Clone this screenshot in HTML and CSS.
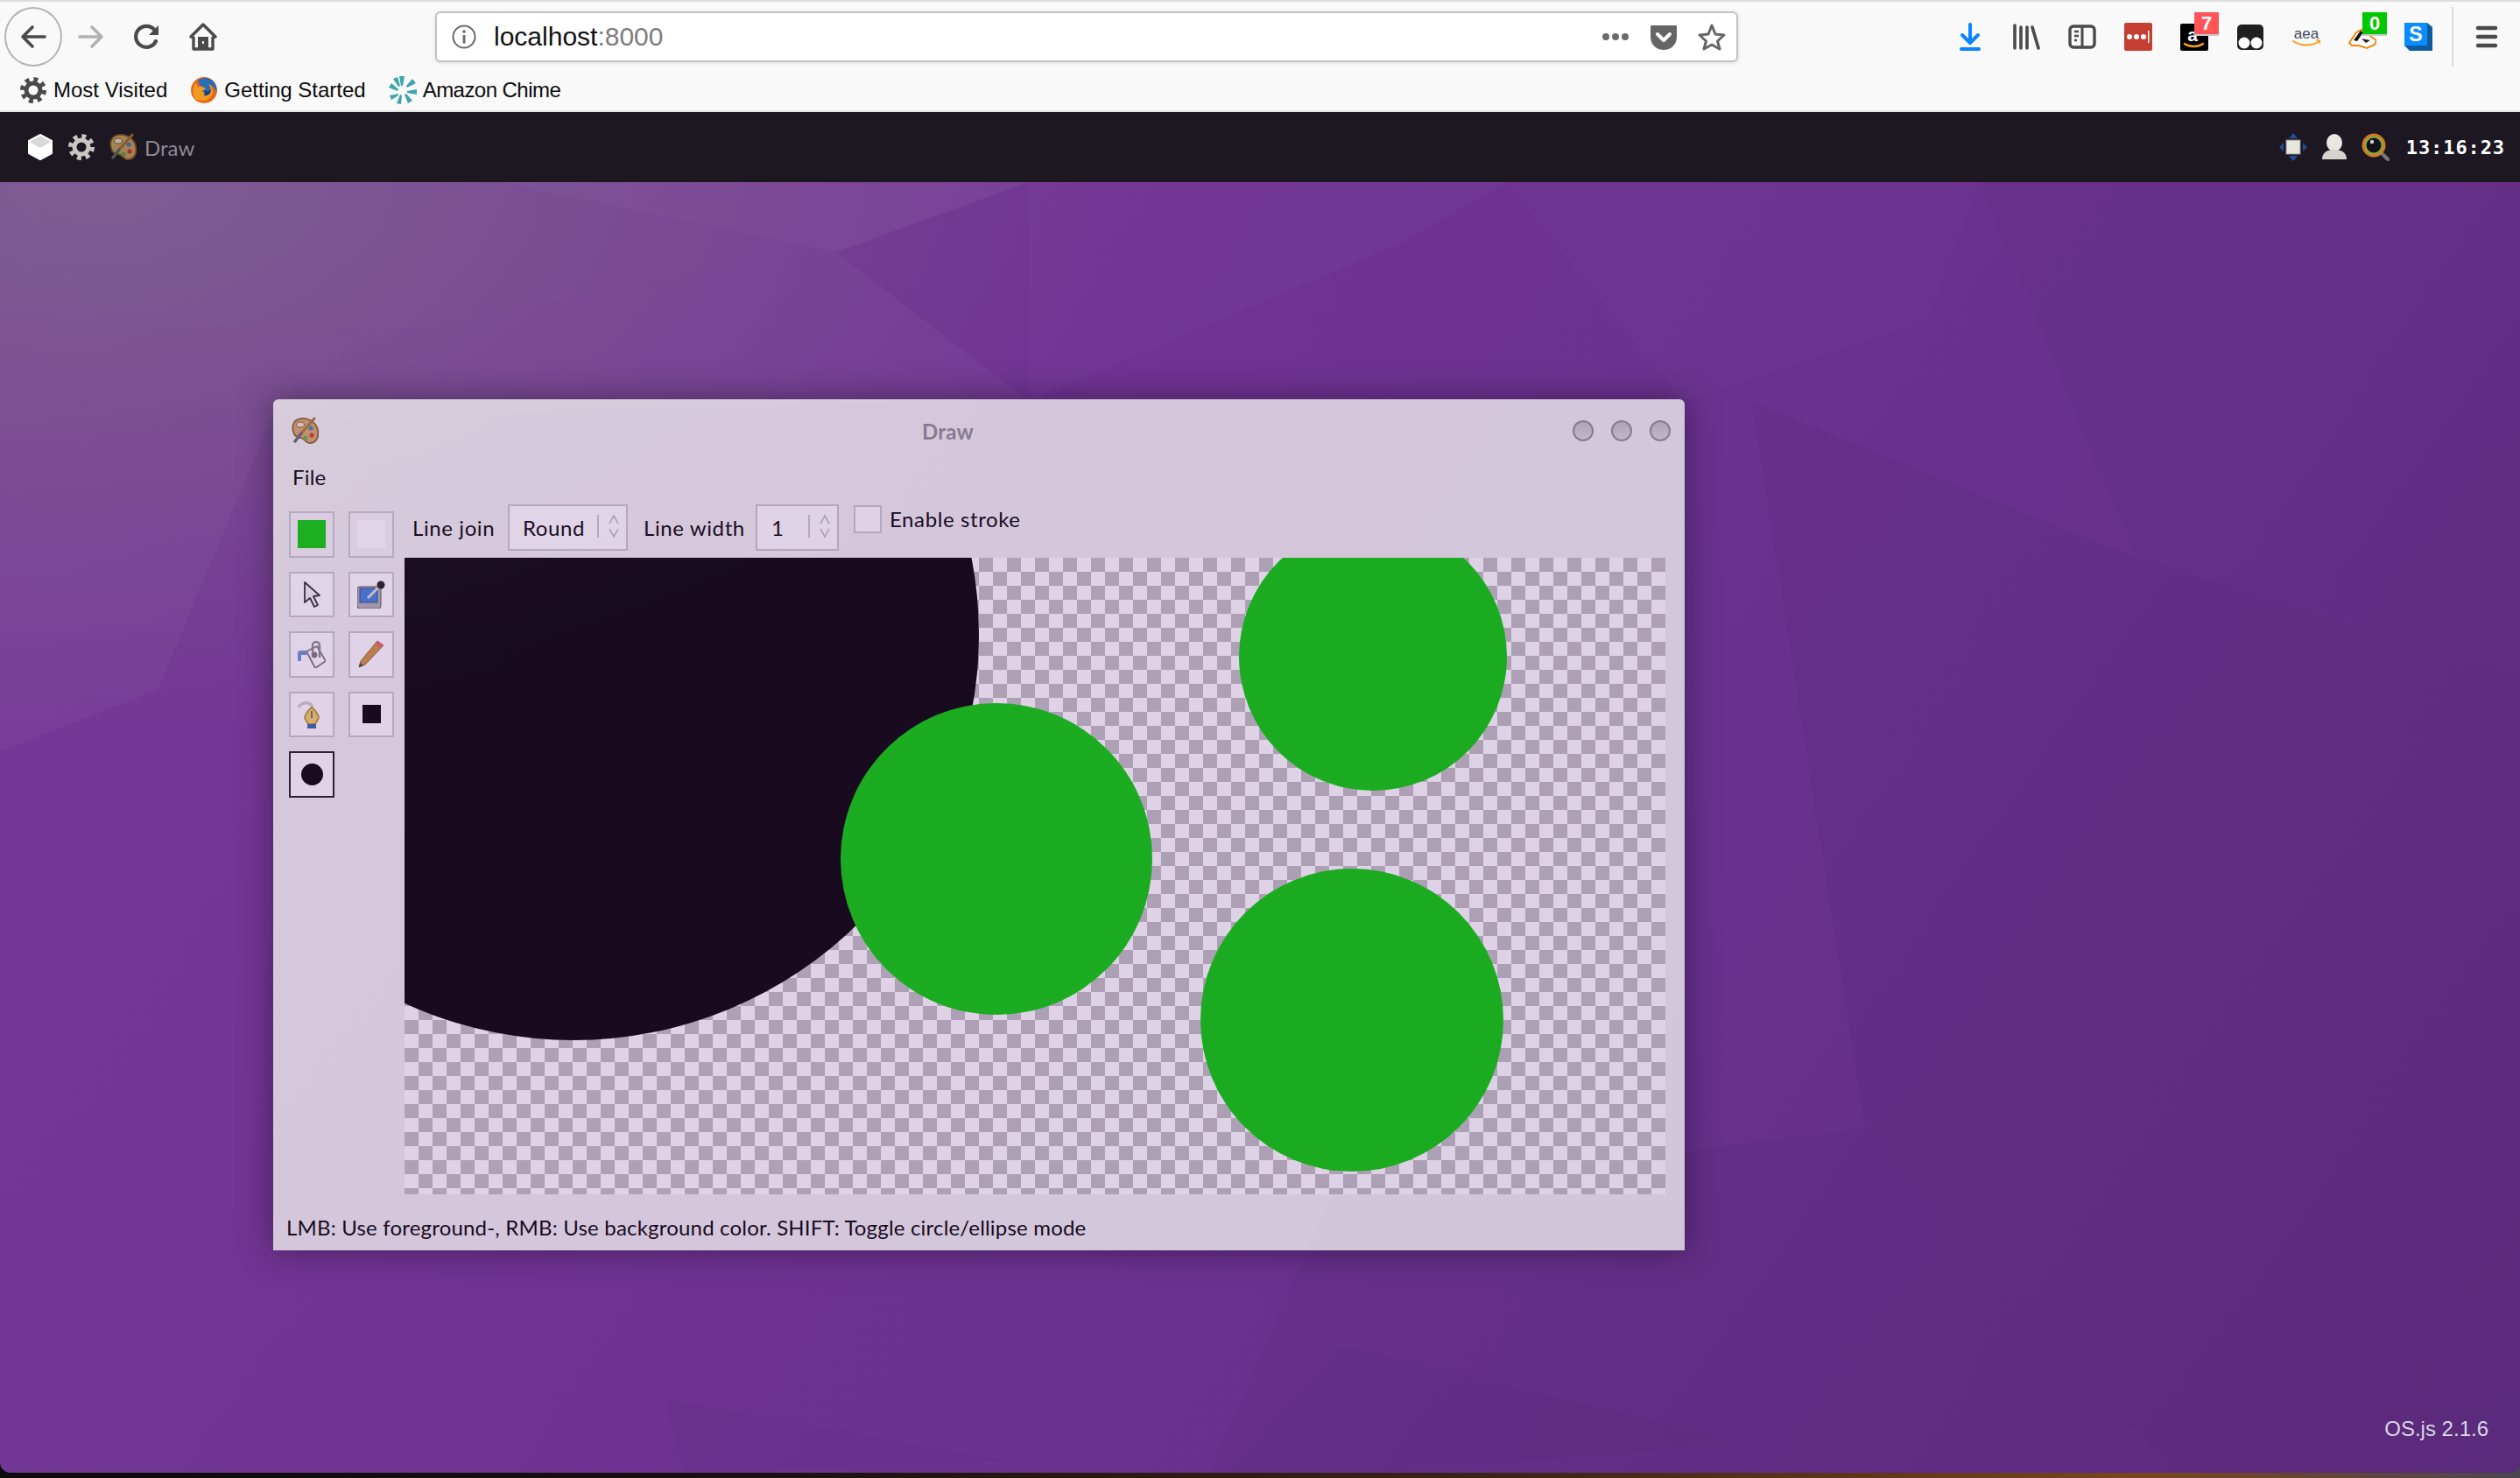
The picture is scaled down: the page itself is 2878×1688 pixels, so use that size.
FILE: index.html
```html
<!DOCTYPE html>
<html lang="en">
<head>
    <meta charset="UTF-8">
    <title>OS.js</title>
    <link rel="stylesheet" href="styles.css">
</head>
<body>
    <svg class="sprite" width="0" height="0">
        <symbol id="gear" viewBox="0 0 32 32">
            <circle cx="16" cy="16" r="8" fill="none" stroke="currentColor" stroke-width="5"/>
            <circle cx="16" cy="16" r="12.5" fill="none" stroke="currentColor" stroke-width="5" stroke-dasharray="4.9 4.92"/>
        </symbol>
        <symbol id="palette" viewBox="0 0 32 32">
            <path d="M8 3c7-3 18 0 22 9 3 8 1 17-7 18-5 1-6-3-9-5-3-2-8-1-10-5C1 13 2 6 8 3z" fill="#d3a665" stroke="#8a5f2a" stroke-width="1.8"/>
            <ellipse cx="11" cy="9" rx="4.500" ry="3" fill="#efe3cf" stroke="#8a5f2a"/>
            <circle cx="23" cy="13" r="2.600" fill="#4a78c0"/>
            <circle cx="24" cy="21" r="2.600" fill="#d23a2c"/>
            <circle cx="17" cy="24" r="2.600" fill="#6fa83c"/>
            <path d="M27 2 12 19" stroke="#a9752f" stroke-width="3" stroke-linecap="round"/>
            <path d="M12 19 5 28" stroke="#5f666e" stroke-width="3.500" stroke-linecap="round"/>
        </symbol>
    </svg>

    <header class="browser-bar">
        <div class="back-btn">
            <svg class="icon" viewBox="0 0 32 32"><path d="M29 16H5M15 5 4 16l11 11" fill="none" stroke="#4a4a4a" stroke-width="3.6" stroke-linecap="round" stroke-linejoin="round"/></svg>
        </div>
        <svg class="icon forward" viewBox="0 0 32 32"><path d="M3 16h24M17 5l11 11-11 11" fill="none" stroke="#b1b1b1" stroke-width="3.6" stroke-linecap="round" stroke-linejoin="round"/></svg>
        <svg class="icon nav-icon" viewBox="0 0 32 32"><path d="M26 21a12 12 0 1 1-1-12" fill="none" stroke="#4a4a4a" stroke-width="4.200" stroke-linecap="round"/><path d="M29 3v11H18z" fill="#4a4a4a"/></svg>
        <svg class="icon nav-icon" viewBox="0 0 32 32"><path d="M2 16 16 2l14 14-3 1v13H5V17z" fill="none" stroke="#4a4a4a" stroke-width="3.400" stroke-linejoin="round"/><rect x="10" y="16" width="12" height="14" fill="#4a4a4a"/><rect x="15" y="21" width="2" height="3" fill="#f9f9f9"/></svg>

        <div class="url-bar">
            <svg class="info-icon" viewBox="0 0 30 30"><circle cx="15" cy="15" r="12.500" fill="none" stroke="#6a6a6a" stroke-width="2"/><circle cx="15" cy="9" r="1.800" fill="#6a6a6a"/><rect x="13.600" y="13" width="2.800" height="9.500" fill="#6a6a6a"/></svg>
            <span class="url-host">localhost</span><span class="url-port">:8000</span>
            <div class="url-actions">
                <svg class="icon" viewBox="0 0 32 32"><circle cx="5" cy="16" r="4" fill="#6b6b6b"/><circle cx="16" cy="16" r="4" fill="#6b6b6b"/><circle cx="27" cy="16" r="4" fill="#6b6b6b"/></svg>
                <svg class="icon" viewBox="0 0 32 32"><path d="M2 3h28a1 1 0 0 1 1 1v12c0 9-7 15-15 15S1 25 1 16V4a1 1 0 0 1 1-1z" fill="#666"/><path d="m9 13 7 7 7-7" fill="none" stroke="#fff" stroke-width="4" stroke-linecap="round" stroke-linejoin="round"/></svg>
                <svg class="icon" viewBox="0 0 32 32"><path d="m16 3 4 10 10 1-7.500 7 2.500 9-9-5-9 5 2.500-9L2 14l10-1z" fill="none" stroke="#666" stroke-width="3" stroke-linejoin="round"/></svg>
            </div>
        </div>

        <div class="addons">
            <svg class="icon" viewBox="0 0 32 32"><path d="M16 2v20M7 14l9 9 9-9" fill="none" stroke="#0a84ff" stroke-width="4" stroke-linecap="round" stroke-linejoin="round"/><rect x="4" y="28" width="24" height="4" rx="2" fill="#0a84ff"/></svg>
            <svg class="icon" viewBox="0 0 32 32"><g fill="none" stroke="#4a4a4a" stroke-width="3.600" stroke-linecap="round"><path d="M3 3v26M10 5v24M17 5v24M23 5l7 24"/></g></svg>
            <svg class="icon" viewBox="0 0 32 32"><rect x="2" y="4" width="28" height="24" rx="4" fill="none" stroke="#4a4a4a" stroke-width="3.400"/><path d="M16 4v24" stroke="#4a4a4a" stroke-width="3"/><path d="M7 10h5M7 15h5M7 20h3" stroke="#4a4a4a" stroke-width="2.400"/></svg>
            <svg class="icon" viewBox="0 0 32 32"><rect width="32" height="32" rx="2" fill="#c43e32"/><circle cx="6" cy="16" r="3" fill="#fff"/><circle cx="14" cy="16" r="3" fill="#fff"/><circle cx="22" cy="16" r="3" fill="#fff"/><rect x="27" y="9" width="1.500" height="14" fill="#fff"/></svg>
            <div class="addon">
                <svg class="icon" viewBox="0 0 32 32"><rect y="1" width="32" height="31" rx="2" fill="#000"/><text class="amazon-a" x="14" y="21" text-anchor="middle">a</text><path d="M5 24c6 4 15 4 21 0" fill="none" stroke="#f7a01c" stroke-width="2.400" stroke-linecap="round"/></svg>
                <span class="badge badge-red">7</span>
            </div>
            <svg class="icon" viewBox="0 0 32 32"><rect x="1" y="2" width="30" height="29" rx="5" fill="#1f1f1f"/><circle cx="9" cy="23" r="6.500" fill="#fff"/><circle cx="23" cy="23" r="6.500" fill="#fff"/></svg>
            <svg class="icon" viewBox="0 0 32 32"><text class="aea-text" x="16" y="18" text-anchor="middle">aea</text><path d="M1 21c9 6 21 6 30 0" fill="none" stroke="#f7a01c" stroke-width="2" stroke-linecap="round"/><path d="m27 20 5 0-1 4" fill="none" stroke="#f7a01c" stroke-width="1.500"/></svg>
            <div class="addon">
                <svg class="icon" viewBox="0 0 32 32"><path d="M1 23 9 11l8-4 9 9 6 4-2 5-9 4-9-3-8 0z" fill="#fff" stroke="#f08a10" stroke-width="2"/><path d="m6 20 8-11 3 2-7 10z" fill="#111"/><path d="m15 18 10 2-5 3z" fill="#222"/></svg>
                <span class="badge badge-green">0</span>
            </div>
            <svg class="icon" viewBox="0 0 32 32"><path d="M26 0l6 5v27H6l-6-6V0z" fill="#0e5c9e"/><rect width="26" height="26" fill="#0a8dff"/><text class="skype-s" x="13" y="21" text-anchor="middle">S</text></svg>
        </div>
        <div class="bar-divider"></div>
        <svg class="icon" viewBox="0 0 32 32"><path d="M6 6h20M6 16h20M6 26h20" stroke="#4a4a4a" stroke-width="4.400" stroke-linecap="round"/></svg>
    </header>

    <nav class="bookmarks">
        <div class="bookmark">
            <svg class="bookmark-icon gear-dark"><use href="#gear"/></svg>
            <span>Most Visited</span>
        </div>
        <div class="bookmark">
            <svg class="bookmark-icon" viewBox="0 0 32 32">
                <circle cx="16" cy="16" r="15" fill="#e8661c"/>
                <path d="M6 26C2 20 3 12 7 7c0 3 1 5 3 6 2-3 5-5 8-5 5 0 8 4 8 9 0 6-5 11-11 11-4 0-7-1-9-2z" fill="#f09a20"/>
                <path d="M9 5c4-4 13-4 18 1 3 4 4 9 3 12-2-5-5-8-9-9 2 2 3 5 1 8-3 3-7 2-8 0l4-3c-3-2-6-2-7-4z" fill="#2a6db4"/>
                <path d="M17 16c2 3 7 1 7-3 1 6-3 10-8 9z" fill="#1c3f80"/>
            </svg>
            <span>Getting Started</span>
        </div>
        <div class="bookmark bookmark-tight">
            <svg class="bookmark-icon" viewBox="0 0 32 32">
                <g fill="#3da5ac">
                    <path d="M12 0h6l-2 11h-2z"/>
                    <path d="m27 3 4 5-10 5-1-2z"/>
                    <path d="M32 15v6l-11-2v-2z"/>
                    <path d="m27 28-5 3-4-10 2-1z"/>
                    <path d="m14 32-5-1 4-10 2 1z"/>
                    <path d="m3 27-2-5 10-2v2z"/>
                    <path d="M0 13l3-5 8 7-1 2z"/>
                    <path d="m5 3 5-2 3 10-2 1z"/>
                </g>
            </svg>
            <span>Amazon Chime</span>
        </div>
    </nav>

    <div class="taskbar">
        <svg class="icon" viewBox="0 0 32 32">
            <path d="M16 2 29 9v14l-13 7-13-7V9z" fill="#fff" stroke="#fff" stroke-width="2" stroke-linejoin="round"/>
            <path d="m16 3 12 7-12 7-12-7z" fill="#d8d8d8"/>
        </svg>
        <svg class="icon gear-light"><use href="#gear"/></svg>
        <svg class="icon task-icon"><use href="#palette"/></svg>
        <span class="task-label">Draw</span>
        <div class="tray">
            <svg class="icon" viewBox="0 0 32 32">
                <g fill="#1d4f9c"><path d="m16 0 5 6H11zM16 32l-5-6h10zM0 16l5-5v10zM32 16l-5 5V11z"/></g>
                <rect x="8" y="8" width="16" height="16" fill="#e7e6df" stroke="#8d8c86"/>
            </svg>
            <svg class="icon" viewBox="0 0 32 32">
                <ellipse cx="16" cy="11" rx="9" ry="10" fill="#e9e7e2"/>
                <path d="M2 30c0-8 6-11 14-11s14 3 14 11z" fill="#d5d3cc"/>
            </svg>
            <svg class="icon" viewBox="0 0 32 32">
                <path d="m23 23 7 7" stroke="#777" stroke-width="4" stroke-linecap="round"/>
                <circle cx="14" cy="14" r="13.500" fill="#d07a28"/>
                <circle cx="14" cy="14" r="10.500" fill="#7fb040"/>
                <circle cx="14" cy="14" r="8.500" fill="#15131a"/>
                <circle cx="12" cy="10" r="2.200" fill="#cfcfd6"/>
            </svg>
            <span class="clock">13:16:23</span>
        </div>
    </div>

    <main class="desktop">
        <div class="wall">
            <svg class="wall-art" viewBox="0 0 2878 1474" preserveAspectRatio="none">
                <g fill="#fff">
                    <polygon points="0,0 570,0 955,80 420,175 0,160" fill-opacity=".035"/>
                    <polygon points="570,0 1175,0 955,80" fill-opacity=".05"/>
                    <polygon points="420,175 955,80 1175,250 310,270" fill-opacity=".03"/>
                    <polygon points="0,160 420,175 310,270 180,580 0,650" fill-opacity=".03"/>
                    <polygon points="1175,0 1720,0 1600,70 1175,250" fill-opacity=".02"/>
                    <polygon points="1720,0 2260,0 2200,160 1920,250" fill-opacity=".01"/>
                </g>
                <g fill="#000">
                    <polygon points="2260,0 2878,0 2878,560 2440,430" fill-opacity=".02"/>
                    <polygon points="2000,250 2440,430 2878,560 2878,1474 2480,1474 2130,1080" fill-opacity=".03"/>
                    <polygon points="1520,1160 2130,1080 2480,1474 1380,1474" fill-opacity=".025"/>
                    <polygon points="1530,1330 2000,1440 1580,1474 1400,1474" fill-opacity=".02"/>
                    <polygon points="760,1390 1150,1460 780,1474" fill-opacity=".02"/>
                </g>
            </svg>
        </div>

        <section class="window">
            <div class="win-title">
                <svg class="win-icon"><use href="#palette"/></svg>
                <span class="win-name">Draw</span>
                <div class="win-buttons">
                    <span class="win-button"></span>
                    <span class="win-button"></span>
                    <span class="win-button"></span>
                </div>
            </div>
            <div class="win-menu"><span>File</span></div>
            <div class="win-body">
                <div class="tools">
                    <div class="tool"><span class="swatch swatch-fg"></span></div>
                    <div class="tool"><span class="swatch swatch-bg"></span></div>
                    <div class="tool">
                        <svg class="tool-icon" viewBox="0 0 32 32"><path d="M8 2v23l6-5 5 10 4-2-5-10 7-1z" fill="#f4f4f4" stroke="#2a2a2a" stroke-width="1.800" stroke-linejoin="round"/></svg>
                    </div>
                    <div class="tool">
                        <svg class="tool-icon" viewBox="0 0 32 32">
                            <rect x="0" y="7" width="27" height="25" rx="3" fill="#b0b0b0" stroke="#555"/>
                            <rect x="3" y="9" width="20" height="16" fill="#3f7fd8" stroke="#224c88"/>
                            <path d="m12 20 12-12" stroke="#ddd" stroke-width="3"/>
                            <circle cx="27" cy="5" r="4.500" fill="#1a1a1a"/>
                        </svg>
                    </div>
                    <div class="tool">
                        <svg class="tool-icon" viewBox="0 0 32 32">
                            <path d="M10 13 22 7l10 17-12 8z" fill="#fff" stroke="#777" stroke-width="1.800" stroke-linejoin="round"/>
                            <path d="M17 14V6a4 4 0 0 1 8 0v14" fill="none" stroke="#888" stroke-width="2.400"/>
                            <circle cx="19" cy="17" r="3.400" fill="#777"/>
                            <path d="M11 12H3a3 3 0 0 0-3 3v9h4v-7h6z" fill="#6f8fd8"/>
                        </svg>
                    </div>
                    <div class="tool">
                        <svg class="tool-icon" viewBox="0 0 32 32">
                            <path d="M23 1 4 24l-2 7 7-3L30 6z" fill="#cf9240" stroke="#8a6024"/>
                            <path d="m23 1 7 5-3 3-7-5z" fill="#e8626a"/>
                            <path d="m2 31 1-5 4 3z" fill="#444"/>
                        </svg>
                    </div>
                    <div class="tool">
                        <svg class="tool-icon" viewBox="0 0 32 32">
                            <path d="M1 8c3-6 12-7 15-2 1 2 1 4 1 6" fill="none" stroke="#cfcfcf" stroke-width="3.500"/>
                            <path d="M16 8c3 2 8 8 8 12l-4 7h-8l-4-7c0-4 5-10 8-12z" fill="#f0d060" stroke="#b8952c" stroke-width="1.800"/>
                            <path d="M16 12v8" stroke="#555" stroke-width="1.500"/>
                            <rect x="11" y="27" width="10" height="5" fill="#3564b0"/>
                        </svg>
                    </div>
                    <div class="tool"><span class="shape-square"></span></div>
                    <div class="tool tool-active"><span class="shape-circle"></span></div>
                </div>
                <div class="work">
                    <div class="options">
                        <span class="opt-label">Line join</span>
                        <div class="select select-join">
                            <span class="select-value">Round</span>
                            <span class="select-line"></span>
                            <svg class="select-arrows" viewBox="0 0 12 26"><path d="M1 10 6 1l5 9M1 16l5 9 5-9" fill="none" stroke="#b4b4b4" stroke-width="1.500"/></svg>
                        </div>
                        <span class="opt-label">Line width</span>
                        <div class="select select-width">
                            <span class="select-value">1</span>
                            <span class="select-line"></span>
                            <svg class="select-arrows" viewBox="0 0 12 26"><path d="M1 10 6 1l5 9M1 16l5 9 5-9" fill="none" stroke="#b4b4b4" stroke-width="1.500"/></svg>
                        </div>
                        <span class="checkbox"></span>
                        <span class="check-label">Enable stroke</span>
                    </div>
                    <div class="canvas">
                        <svg class="canvas-art" viewBox="0 0 1440 727">
                            <circle cx="193" cy="88" r="463" fill="#000"/>
                            <circle cx="676" cy="344" r="178" fill="#05ce02"/>
                            <circle cx="1106" cy="113" r="153" fill="#05ce02"/>
                            <circle cx="1082" cy="528" r="173" fill="#05ce02"/>
                        </svg>
                    </div>
                </div>
            </div>
            <div class="win-status">LMB: Use foreground-, RMB: Use background color. SHIFT: Toggle circle/ellipse mode</div>
        </section>

        <div class="version">OS.js 2.1.6</div>
    </main>
</body>
</html>
```

FILE: styles.css
```css
* {
    box-sizing: border-box;
}

html, body {
    margin: 0;
    height: 100%;
    overflow: hidden;
}

body {
    width: 2878px;
    height: 1688px;
    background-color: #f9f9f9;
    font-family: "Liberation Sans", Arial, sans-serif;
}

.sprite {
    position: absolute;
}

.icon {
    display: block;
    flex: none;
    width: 32px;
    height: 32px;
}

/* browser chrome */
.browser-bar {
    display: flex;
    align-items: center;
    height: 82px;
    padding-left: 5px;
    border-top: 2px solid #dedede;
    background-color: #f9f9f9;
}

.back-btn {
    display: flex;
    align-items: center;
    justify-content: center;
    flex: none;
    width: 66px;
    height: 68px;
    border: 2px solid #b4b4b4;
    border-radius: 50%;
}

.forward {
    margin-left: 17px;
}

.nav-icon {
    margin-left: 32px;
}

.url-bar {
    display: flex;
    align-items: center;
    flex: none;
    width: 1488px;
    height: 58px;
    margin-left: 249px;
    padding: 0 12px 0 16px;
    border: 2px solid #c2c2c2;
    border-radius: 6px;
    background-color: #fff;
    box-shadow: 0 1px 4px rgba(0, 0, 0, 0.12);
    font-size: 30px;
}

.info-icon {
    width: 30px;
    height: 30px;
    margin-right: 19px;
}

.url-host {
    color: #111;
}

.url-port {
    color: #7d7d7d;
}

.url-actions {
    display: flex;
    gap: 23px;
    margin-left: auto;
}

.addons {
    display: flex;
    gap: 32px;
    margin-left: 249px;
}

.addon {
    position: relative;
    width: 32px;
    height: 32px;
}

.badge {
    position: absolute;
    top: -12px;
    left: 16px;
    width: 28px;
    height: 27px;
    border-bottom: 2px solid #c9c9c9;
    color: #fff;
    font-size: 22px;
    font-weight: bold;
    line-height: 25px;
    text-align: center;
}

.badge-red {
    background-color: #ff5558;
}

.badge-green {
    background-color: #00c800;
}

.amazon-a {
    fill: #fff;
    font-family: "Liberation Sans", sans-serif;
    font-size: 21px;
    font-weight: bold;
}

.aea-text {
    fill: #3f4a5c;
    font-family: "Liberation Sans", sans-serif;
    font-size: 17px;
}

.skype-s {
    fill: #fff;
    font-family: "Liberation Sans", sans-serif;
    font-size: 23px;
    font-weight: bold;
}

.bar-divider {
    flex: none;
    width: 2px;
    height: 68px;
    margin: 0 22px;
    background-color: #dcdcdc;
}

.bookmarks {
    display: flex;
    gap: 26px;
    height: 46px;
    padding: 0 0 2px 22px;
    border-bottom: 2px solid #e2e2e2;
    background-color: #f9f9f9;
    color: #0c0c0c;
    font-size: 24px;
}

.bookmark {
    display: flex;
    align-items: center;
    gap: 7px;
}

.bookmark-tight {
    letter-spacing: -0.55px;
}

.bookmark-icon {
    width: 32px;
    height: 32px;
}

.gear-dark {
    color: #4a4a4a;
}

/* OS.js panel */
.taskbar {
    display: flex;
    align-items: center;
    gap: 15px;
    height: 80px;
    padding: 0 17px 0 30px;
    background-color: #1d1722;
}

.gear-light {
    color: #c9c7c4;
}

.task-icon {
    opacity: 0.75;
}

.task-label {
    margin-left: -6px;
    color: #8d8a92;
    font-family: Lato, sans-serif;
    font-size: 24px;
}

.tray {
    display: flex;
    align-items: center;
    gap: 15px;
    margin-left: auto;
}

.clock {
    margin-left: 4px;
    color: #fff;
    font-family: "DejaVu Sans Mono", monospace;
    font-size: 22px;
    font-weight: bold;
    letter-spacing: 0.9px;
}

/* desktop */
.desktop {
    position: relative;
    height: 1480px;
    background: linear-gradient(90deg, #0d0b0e 0%, #17110f 30%, #3c2418 60%, #7a4420 85%, #4a4650 100%);
}

.wall {
    height: 1474px;
    border-radius: 0 0 12px 12px;
    overflow: hidden;
    background:
        radial-gradient(1150px 620px at 120px 0, rgba(130, 140, 125, 0.36), rgba(130, 140, 125, 0) 100%),
        linear-gradient(125deg, #773a97 0%, #6f3392 40%, #68318d 65%, #5d2c7f 100%);
}

.wall-art {
    display: block;
    width: 100%;
    height: 100%;
}

.version {
    position: absolute;
    right: 36px;
    bottom: 42px;
    color: #dcd5e6;
    font-size: 24px;
    line-height: 28px;
}

/* draw window */
.window {
    position: absolute;
    top: 248px;
    left: 312px;
    display: flex;
    flex-direction: column;
    width: 1612px;
    height: 972px;
    border-radius: 6px 6px 0 0;
    background-color: #f1f1f0;
    box-shadow: 0 0 36px rgba(0, 0, 0, 0.5);
    color: #000;
    font-family: Lato, sans-serif;
    font-size: 24px;
    letter-spacing: 0.19px;
    opacity: 0.78;
}

.win-title {
    position: relative;
    display: flex;
    align-items: center;
    flex: none;
    height: 72px;
    padding: 0 16px 0 20px;
}

.win-icon {
    width: 32px;
    height: 32px;
}

.win-name {
    position: absolute;
    left: 741px;
    color: #8f8f8f;
    font-weight: bold;
}

.win-buttons {
    display: flex;
    gap: 20px;
    margin-left: auto;
}

.win-button {
    width: 24px;
    height: 24px;
    border: 2px solid #909090;
    border-radius: 50%;
    background: linear-gradient(#c4c4c4, #dcdcdc);
}

.win-menu {
    flex: none;
    height: 48px;
    padding-left: 22px;
    line-height: 34px;
}

.win-body {
    display: flex;
    flex: none;
    height: 788px;
    padding: 0 22px 0 18px;
}

.tools {
    display: grid;
    grid-template-columns: 52px 52px;
    grid-auto-rows: 52.5px;
    gap: 16px;
    flex: none;
    width: 132px;
    padding-top: 8px;
}

.tool {
    display: flex;
    align-items: center;
    justify-content: center;
    border: 2px solid #c8c8c8;
    background-color: #fff;
}

.tool-active {
    border-color: #1c1c1c;
}

.tool-icon {
    width: 32px;
    height: 32px;
}

.swatch {
    width: 32px;
    height: 32px;
}

.swatch-fg {
    background-color: #05ce02;
}

.swatch-bg {
    background-color: #fff;
}

.tool:nth-child(-n+2) {
    background-color: #f5f5f5;
}

.shape-square {
    width: 21px;
    height: 21px;
    background-color: #000;
}

.shape-circle {
    width: 25px;
    height: 25px;
    border-radius: 50%;
    background-color: #000;
}

.work {
    display: flex;
    flex-direction: column;
    flex: 1;
}

.options {
    display: flex;
    align-items: flex-start;
    flex: none;
    height: 61px;
    padding-left: 9px;
    letter-spacing: 0.6px;
}

.opt-label {
    width: 91px;
    white-space: nowrap;
    line-height: 53px;
}

.opt-label + .select + .opt-label {
    width: 110px;
}

.select {
    display: flex;
    align-items: center;
    height: 53px;
    border: 2px solid #c8c8c8;
    background-color: #fff;
}

.select-join {
    width: 137px;
    margin: 0 18px;
    padding-left: 15px;
}

.select-width {
    width: 95px;
    margin: 0 17px 0 18px;
    padding-left: 16px;
}

.select-value {
    flex: 1;
}

.select-line {
    width: 2px;
    height: 26px;
    margin-bottom: 4px;
    background-color: #c8c8c8;
}

.select-arrows {
    width: 12px;
    height: 26px;
    margin: 0 8px 4px 11px;
}

.checkbox {
    flex: none;
    width: 32px;
    height: 32px;
    margin-top: 1px;
    border: 2px solid #c8c8c8;
    background-color: #fff;
}

.check-label {
    margin-left: 9px;
    line-height: 34px;
}

.canvas {
    flex: none;
    width: 1440px;
    height: 727px;
    background-color: #fff;
    background-image: conic-gradient(#c0c0c0 25%, #fff 0 50%, #c0c0c0 0 75%, #fff 0);
    background-size: 32px 32px;
    overflow: hidden;
}

.canvas-art {
    display: block;
    width: 1440px;
    height: 727px;
}

.win-status {
    flex: none;
    height: 64px;
    padding: 22px 0 0 15px;
    line-height: 32px;
}
```
